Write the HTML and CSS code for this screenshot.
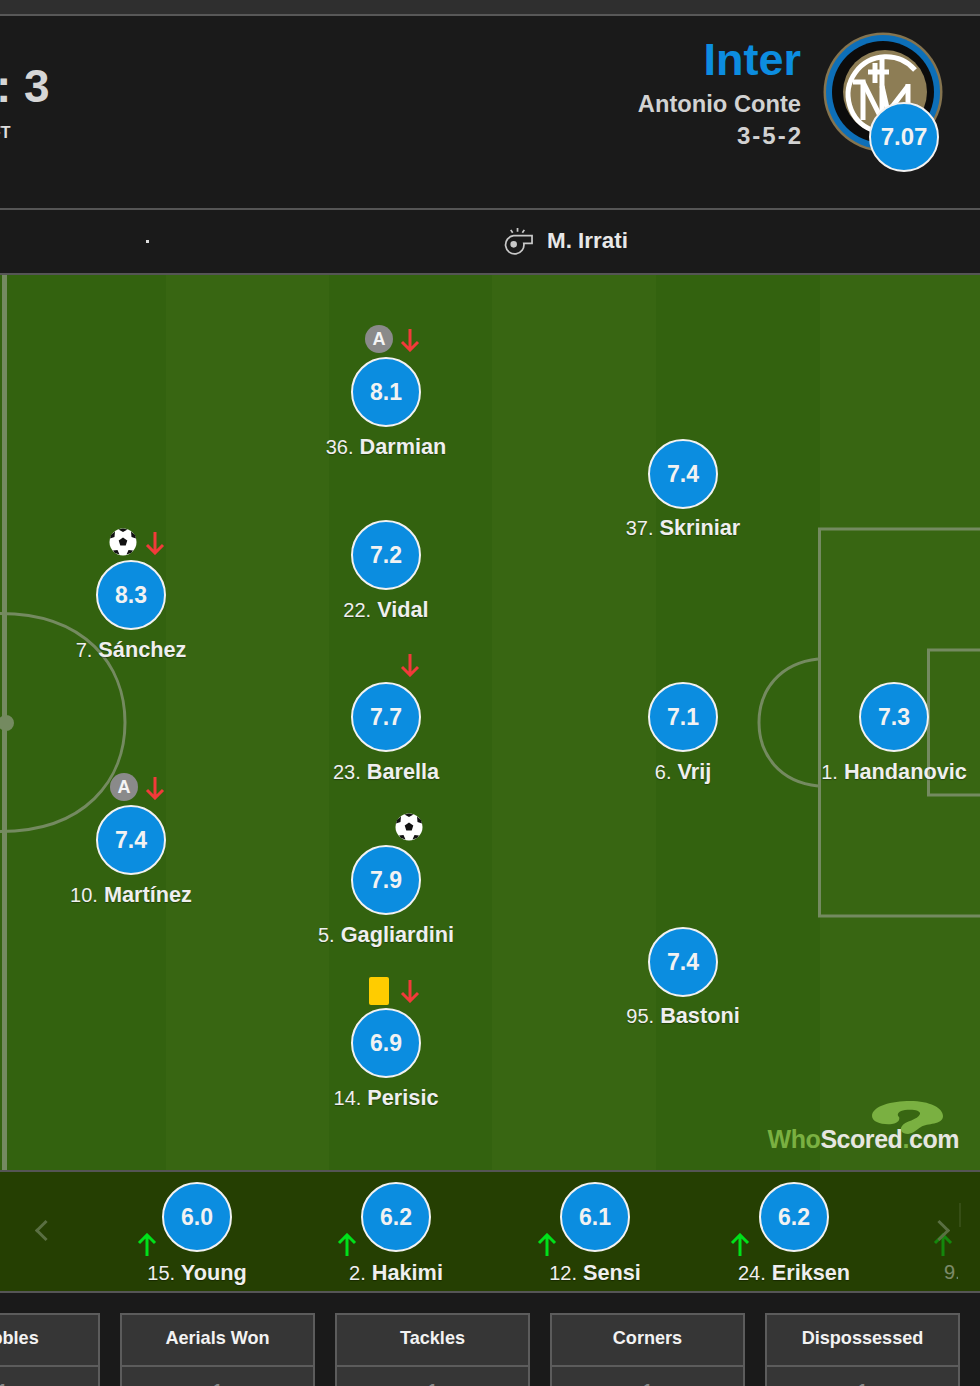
FILE: index.html
```html
<!DOCTYPE html>
<html lang="en">
<head>
<meta charset="utf-8">
<title>Inter match report</title>
<link rel="stylesheet" href="styles.css">
</head>
<body>
<div class="topbar"></div>
<header class="match-header">
  <div class="score-side">
    <div class="score">: 3</div>
    <div class="status">FT</div>
  </div>
  <div class="team-side">
    <div class="team-info">
      <div class="team-name">Inter</div>
      <div class="manager">Antonio Conte</div>
      <div class="formation">3-5-2</div>
    </div>
    <div class="crest-wrap">
      <svg class="crest" viewBox="0 0 120 120" aria-hidden="true">
        <circle cx="60" cy="60" r="59.500" fill="#85744f"/>
        <circle cx="60" cy="60" r="57" fill="#0d6fb8"/>
        <circle cx="60" cy="60" r="51" fill="#0c0c0c"/>
        <circle cx="62" cy="60" r="42" fill="#8d7d55"/>
        <g fill="none" stroke="#fff" stroke-width="5">
          <path d="M92 38A38 38 0 1 0 49 98"/>
          <path d="M30 50L40 50V88"/>
          <path d="M40 50L59 88"/>
          <path d="M59 26V88"/>
          <path d="M52 31V51M45 40H66"/>
          <path d="M85 52V82"/>
          <path d="M85 54L65 80"/>
          <path d="M59 54L65 80"/>
        </g>
      </svg>
      <div class="rating crest-rating">7.07</div>
    </div>
  </div>
</header>
<section class="info-row">
  <span class="info-dot"></span>
  <div class="referee">
    <svg class="whistle" viewBox="0 0 30 30" aria-hidden="true">
      <g fill="none" stroke="#c8c8c8" stroke-width="1.800">
        <path d="M10 10H29V18H20.500A9.500 9.500 0 1 1 10 10Z"/>
        <circle cx="10" cy="19" r="2.500" fill="#c8c8c8"/>
        <path d="M14 6V2M9 7L7 4M19 7L21 4"/>
      </g>
    </svg>
    <span>M. Irrati</span>
  </div>
</section>
<main class="pitch">
  <svg class="pitch-lines" viewBox="0 0 980 895" aria-hidden="true">
    <g fill="none" stroke="#748a60" stroke-width="3">
      <path d="M0 338.500C85 338.500 125 390 125 447.500C125 505 85 556.500 0 556.500"/>
      <rect x="819.500" y="254" width="170" height="387"/>
      <rect x="928.500" y="375" width="70" height="145"/>
      <path d="M818 384C780 388 759 415 759 447.500C759 480 780 507 818 511"/>
    </g>
    <rect x="2" y="0" width="5" height="895" fill="#748a60"/>
    <circle cx="6" cy="448" r="8" fill="#748a60"/>
  </svg>

  <div class="player pos-darmian">
    <div class="events"><span class="ev assist">A</span><svg class="arrow" viewBox="0 0 20 24"><path class="off" d="M10 1V22M2 14L10 22L18 14"/></svg></div>
    <div class="rating">8.1</div>
    <div class="name"><span class="num">36.</span> Darmian</div>
  </div>
  <div class="player pos-vidal">
    <div class="rating">7.2</div>
    <div class="name"><span class="num">22.</span> Vidal</div>
  </div>
  <div class="player pos-barella">
    <div class="events"><svg class="arrow" viewBox="0 0 20 24"><path class="off" d="M10 1V22M2 14L10 22L18 14"/></svg></div>
    <div class="rating">7.7</div>
    <div class="name"><span class="num">23.</span> Barella</div>
  </div>
  <div class="player pos-gagliardini">
    <div class="events">
      <svg class="ball" viewBox="0 0 28 28"><circle cx="14" cy="14" r="13.500" fill="#fff"/><path d="M14 9.500L18.300 12.600L16.700 17.600H11.300L9.700 12.600Z" fill="#111"/><path d="M9.500 1.500L14 4L18.500 1.500L14 .5ZM1 10.500L5.500 9L6 3.500L2 7ZM27 10.500L22.500 9L22 3.500L26 7ZM4 22.500L8.500 22L10.500 26.500L6 25ZM24 22.500L19.500 22L17.500 26.500L22 25Z" fill="#111"/></svg>
    </div>
    <div class="rating">7.9</div>
    <div class="name"><span class="num">5.</span> Gagliardini</div>
  </div>
  <div class="player pos-perisic">
    <div class="events"><span class="ev card"></span><svg class="arrow" viewBox="0 0 20 24"><path class="off" d="M10 1V22M2 14L10 22L18 14"/></svg></div>
    <div class="rating">6.9</div>
    <div class="name"><span class="num">14.</span> Perisic</div>
  </div>
  <div class="player pos-skriniar">
    <div class="rating">7.4</div>
    <div class="name"><span class="num">37.</span> Skriniar</div>
  </div>
  <div class="player pos-vrij">
    <div class="rating">7.1</div>
    <div class="name"><span class="num">6.</span> Vrij</div>
  </div>
  <div class="player pos-bastoni">
    <div class="rating">7.4</div>
    <div class="name"><span class="num">95.</span> Bastoni</div>
  </div>
  <div class="player pos-handanovic">
    <div class="rating">7.3</div>
    <div class="name"><span class="num">1.</span> Handanovic</div>
  </div>
  <div class="player pos-sanchez">
    <div class="events">
      <svg class="ball" viewBox="0 0 28 28"><circle cx="14" cy="14" r="13.500" fill="#fff"/><path d="M14 9.500L18.300 12.600L16.700 17.600H11.300L9.700 12.600Z" fill="#111"/><path d="M9.500 1.500L14 4L18.500 1.500L14 .5ZM1 10.500L5.500 9L6 3.500L2 7ZM27 10.500L22.500 9L22 3.500L26 7ZM4 22.500L8.500 22L10.500 26.500L6 25ZM24 22.500L19.500 22L17.500 26.500L22 25Z" fill="#111"/></svg>
      <svg class="arrow" viewBox="0 0 20 24"><path class="off" d="M10 1V22M2 14L10 22L18 14"/></svg>
    </div>
    <div class="rating">8.3</div>
    <div class="name"><span class="num">7.</span> Sánchez</div>
  </div>
  <div class="player pos-martinez">
    <div class="events"><span class="ev assist">A</span><svg class="arrow" viewBox="0 0 20 24"><path class="off" d="M10 1V22M2 14L10 22L18 14"/></svg></div>
    <div class="rating">7.4</div>
    <div class="name"><span class="num">10.</span> Martínez</div>
  </div>

  <div class="brand">
    <svg class="brand-mark" viewBox="0 0 71 33" aria-hidden="true"><path d="M0 15C0 5 20 0 38 0C58 0 71 7 71 15C71 24 55 22 49 26C44 29 42 32 36 33C30 33 27 29 30 25C33 20 46 19 48 13C49 9 40 8 33 9C27 10 24 13 27 16C28 18 27 22 20 23C10 24 0 21 0 15Z" fill="#7ab041"/></svg>
    <span class="brand-green">Who</span>Scored<span class="brand-green">.</span>com
  </div>
</main>
<section class="subs">
  <div class="sub-arrow-nav nav-left"></div>
  <div class="sub">
    <svg class="arrow up" viewBox="0 0 20 24"><path class="on" d="M10 23V2M2 10L10 2L18 10"/></svg>
    <div class="rating">6.0</div>
    <div class="name"><span class="num">15.</span> Young</div>
  </div>
  <div class="sub sub-hakimi">
    <svg class="arrow up" viewBox="0 0 20 24"><path class="on" d="M10 23V2M2 10L10 2L18 10"/></svg>
    <div class="rating">6.2</div>
    <div class="name"><span class="num">2.</span> Hakimi</div>
  </div>
  <div class="sub sub-sensi">
    <svg class="arrow up" viewBox="0 0 20 24"><path class="on" d="M10 23V2M2 10L10 2L18 10"/></svg>
    <div class="rating">6.1</div>
    <div class="name"><span class="num">12.</span> Sensi</div>
  </div>
  <div class="sub sub-wide">
    <svg class="arrow up" viewBox="0 0 20 24"><path class="on" d="M10 23V2M2 10L10 2L18 10"/></svg>
    <div class="rating">6.2</div>
    <div class="name"><span class="num">24.</span> Eriksen</div>
  </div>
  <div class="ghost">
    <svg class="arrow up" viewBox="0 0 20 24"><path class="on" d="M10 23V2M2 10L10 2L18 10"/></svg>
    <div class="ghost-name">9.</div>
  </div>
  <div class="ghost-edge"></div>
  <div class="sub-arrow-nav nav-right"></div>
</section>
<section class="stats">
  <div class="stat"><div class="stat-head">Dribbles</div><div class="stat-body">1</div></div>
  <div class="stat"><div class="stat-head">Aerials Won</div><div class="stat-body">1</div></div>
  <div class="stat"><div class="stat-head">Tackles</div><div class="stat-body">1</div></div>
  <div class="stat"><div class="stat-head">Corners</div><div class="stat-body">1</div></div>
  <div class="stat"><div class="stat-head">Dispossessed</div><div class="stat-body">1</div></div>
</section>
</body>
</html>
```
FILE: styles.css
```css
* { box-sizing: border-box; }
html, body { margin: 0; padding: 0; }
body {
  width: 980px;
  height: 1386px;
  overflow: hidden;
  background: #1a1a1a;
  color: #e6e6e6;
  font-family: "Liberation Sans", Arial, sans-serif;
}
.topbar {
  height: 16px;
  background: #2f2f2f;
  border-bottom: 2px solid #585858;
}
.match-header {
  height: 194px;
  display: flex;
  justify-content: space-between;
  border-bottom: 2px solid #555;
}
.score-side { margin-left: -4px; padding-top: 42px; }
.score {
  font-size: 46px;
  font-weight: 700;
  line-height: 56px;
  color: #d6d6d6;
}
.status {
  margin-left: -5px;
  margin-top: 9px;
  font-size: 16px;
  font-weight: 700;
  line-height: 20px;
  color: #ddd;
}
.team-side {
  display: flex;
  padding: 16px 37px 0 0;
}
.team-info {
  text-align: right;
  margin-right: 22px;
}
.team-name {
  margin-top: 2px;
  font-size: 45px;
  font-weight: 700;
  line-height: 52px;
  color: #0c8de0;
}
.manager {
  font-size: 23.700px;
  font-weight: 700;
  line-height: 30px;
  margin-top: 3px;
  color: #d2d2d2;
}
.formation {
  font-size: 24px;
  font-weight: 700;
  line-height: 30px;
  margin-top: 2px;
  margin-right: -2px;
  letter-spacing: 2px;
  color: #d2d2d2;
}
.crest-wrap { position: relative; width: 120px; height: 120px; }
.crest { display: block; width: 120px; height: 120px; }
.rating {
  width: 70px;
  height: 70px;
  border: 2px solid #f2f2f2;
  border-radius: 50%;
  background: #0b8de0;
  color: #f2f2f2;
  font-size: 23px;
  font-weight: 700;
  line-height: 66px;
  text-align: center;
}
.crest-rating {
  position: absolute;
  left: 46px;
  top: 70px;
  font-size: 24px;
}
.info-row {
  height: 65px;
  position: relative;
  display: flex;
  align-items: center;
  border-bottom: 2px solid #555;
}
.info-dot {
  position: absolute;
  left: 146px;
  top: 30px;
  width: 3px;
  height: 3px;
  background: #ddd;
}
.referee {
  margin-left: 504px;
  margin-top: -2px;
  display: flex;
  align-items: center;
  gap: 14px;
  font-size: 22.400px;
  font-weight: 700;
  color: #e8e8e8;
}
.whistle { width: 29px; height: 29px; display: block; }
.pitch {
  position: relative;
  height: 895px;
  overflow: hidden;
  background: linear-gradient(90deg, #33620f 0, #33620f 166px, #386612 166px, #386612 329px, #33620f 329px, #33620f 492px, #386612 492px, #386612 656px, #33620f 656px, #33620f 820px, #386612 820px);
}
.pitch-lines {
  position: absolute;
  left: 0;
  top: 0;
  width: 980px;
  height: 895px;
}
.player {
  position: absolute;
  width: 70px;
  margin-left: -35px;
}
.events {
  position: absolute;
  right: -1px;
  bottom: 100%;
  height: 28px;
  margin-bottom: 3px;
  display: flex;
  align-items: center;
  justify-content: flex-end;
  gap: 5px;
}
.ev { display: block; flex: none; }
.assist {
  width: 28px;
  height: 28px;
  margin: -2px 2px 0 0;
  border-radius: 50%;
  background: #8a8a8a;
  color: #f4f4f4;
  font-size: 18px;
  font-weight: 700;
  line-height: 28px;
  text-align: center;
}
.card {
  width: 20px;
  height: 28px;
  margin: -1px 6px 0 0;
  border-radius: 2px;
  background: #ffcc00;
}
.ball { width: 28px; height: 28px; flex: none; display: block; margin: -2px -1px 0 0; }
.ball + .arrow { margin-left: 4px; }
.arrow { width: 20px; height: 24px; flex: none; display: block; margin-right: 2px; }
.arrow path { fill: none; stroke-width: 3; }
.arrow .off { stroke: #f23a3a; }
.arrow .on { stroke: #00e01a; }
.name {
  position: absolute;
  left: 50%;
  top: 100%;
  margin-top: 7px;
  transform: translateX(-50%);
  white-space: nowrap;
  font-size: 21.700px;
  font-weight: 700;
  line-height: 26px;
  color: #efefef;
  text-shadow: 0 1px 1px rgba(0, 0, 0, .35);
}
.num { font-weight: 400; font-size: 20px; }
.pos-darmian { left: 386px; top: 82px; }
.pos-vidal { left: 386px; top: 245px; }
.pos-barella { left: 386px; top: 407px; }
.pos-gagliardini { left: 386px; top: 570px; }
.pos-perisic { left: 386px; top: 733px; }
.pos-skriniar { left: 683px; top: 164px; }
.pos-vrij { left: 683px; top: 407px; }
.pos-bastoni { left: 683px; top: 652px; }
.pos-skriniar .name, .pos-bastoni .name { margin-top: 6px; }
.pos-handanovic { left: 894px; top: 407px; }
.pos-sanchez { left: 131px; top: 285px; }
.pos-martinez { left: 131px; top: 530px; }
.brand {
  position: absolute;
  right: 21px;
  bottom: 17px;
  font-size: 25px;
  font-weight: 700;
  letter-spacing: -.45px;
  line-height: 28px;
  color: #e6e6e0;
}
.brand-green { color: #7ab041; }
.brand-mark {
  position: absolute;
  right: 16px;
  bottom: 19px;
  width: 71px;
  height: 33px;
}
.subs {
  position: relative;
  height: 123px;
  padding: 10px 0 0 162px;
  display: flex;
  gap: 129px;
  background: #253f02;
  border-top: 2px solid #555;
  border-bottom: 2px solid #555;
}
.sub { position: relative; width: 70px; height: 70px; flex: none; }
.sub .name { margin-top: 8px; }
.sub .arrow.up {
  position: absolute;
  left: -25px;
  top: 51px;
  margin: 0;
}
.sub-hakimi .arrow.up { left: -24px; }
.sub-sensi .arrow.up { left: -23px; }
.sub-wide .arrow.up { left: -29px; }
.ghost {
  position: absolute;
  left: 932px;
  top: 61px;
  opacity: .45;
  width: 26px;
  overflow: hidden;
}
.ghost .arrow { margin: 0 0 0 1px; }
.ghost-name { font-size: 20px; line-height: 26px; margin-left: 12px; margin-top: 2px; }
.ghost-edge {
  position: absolute;
  left: 959px;
  top: 31px;
  width: 2px;
  height: 24px;
  background: rgba(255, 255, 255, .08);
}
.sub-arrow-nav {
  position: absolute;
  top: 51px;
  width: 15px;
  height: 15px;
  border-left: 3px solid #5a6f42;
  border-bottom: 3px solid #5a6f42;
}
.nav-left { left: 38px; transform: rotate(45deg); }
.nav-right { left: 932px; transform: rotate(225deg); z-index: 1; }
.stats {
  display: flex;
  gap: 20px;
  margin-left: -95px;
  padding-top: 20px;
}
.stat {
  width: 195px;
  flex: none;
  height: 100px;
  border: 2px solid #5c5c5c;
  background: #363636;
  text-align: center;
}
.stat-head {
  height: 52px;
  border-bottom: 2px solid #5c5c5c;
  font-size: 18.100px;
  font-weight: 700;
  line-height: 46px;
  color: #f2f2f2;
}
.stat-body {
  padding-top: 14px;
  font-size: 18px;
  font-weight: 700;
  line-height: 20px;
  color: #8a8a8a;
}
```
